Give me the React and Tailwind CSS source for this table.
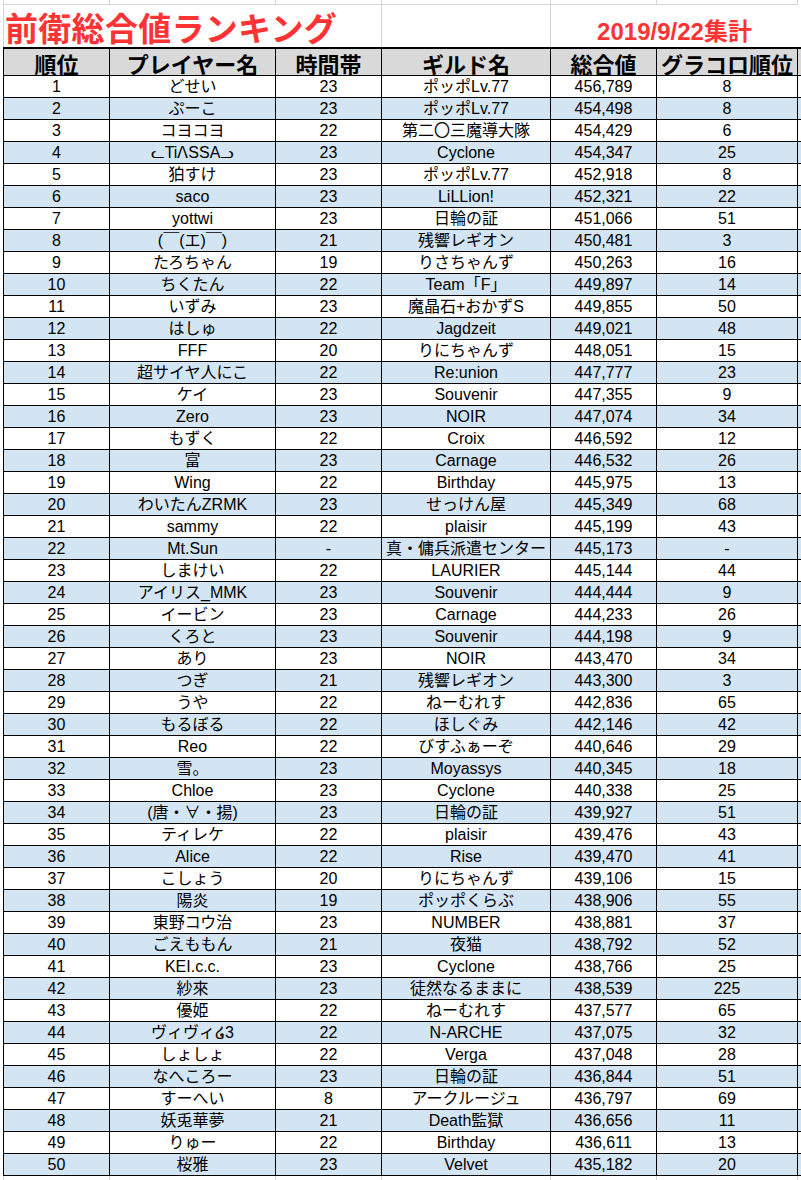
const rows = [
  ["1", "どせい", "23", "ポッポLv.77", "456,789", "8"],
  ["2", "ぷーこ", "23", "ポッポLv.77", "454,498", "8"],
  ["3", "コヨコヨ", "22", "第二〇三魔導大隊", "454,429", "6"],
  ["4", "ᓚTiᐱSSAᓗ", "23", "Cyclone", "454,347", "25"],
  ["5", "狛すけ", "23", "ポッポLv.77", "452,918", "8"],
  ["6", "saco", "23", "LiLLion!", "452,321", "22"],
  ["7", "yottwi", "23", "日輪の証", "451,066", "51"],
  ["8", "(￣(エ)￣)", "21", "残響レギオン", "450,481", "3"],
  ["9", "たろちゃん", "19", "りさちゃんず", "450,263", "16"],
  ["10", "ちくたん", "22", "Team「F」", "449,897", "14"],
  ["11", "いずみ", "23", "魔晶石+おかずS", "449,855", "50"],
  ["12", "はしゅ", "22", "Jagdzeit", "449,021", "48"],
  ["13", "FFF", "20", "りにちゃんず", "448,051", "15"],
  ["14", "超サイヤ人にこ", "22", "Re:union", "447,777", "23"],
  ["15", "ケイ", "23", "Souvenir", "447,355", "9"],
  ["16", "Zero", "23", "NOIR", "447,074", "34"],
  ["17", "もずく", "22", "Croix", "446,592", "12"],
  ["18", "富", "23", "Carnage", "446,532", "26"],
  ["19", "Wing", "22", "Birthday", "445,975", "13"],
  ["20", "わいたんZRMK", "23", "せっけん屋", "445,349", "68"],
  ["21", "sammy", "22", "plaisir", "445,199", "43"],
  ["22", "Mt.Sun", "-", "真・傭兵派遣センター", "445,173", "-"],
  ["23", "しまけい", "22", "LAURIER", "445,144", "44"],
  ["24", "アイリス_MMK", "23", "Souvenir", "444,444", "9"],
  ["25", "イービン", "23", "Carnage", "444,233", "26"],
  ["26", "くろと", "23", "Souvenir", "444,198", "9"],
  ["27", "あり", "23", "NOIR", "443,470", "34"],
  ["28", "つぎ", "21", "残響レギオン", "443,300", "3"],
  ["29", "うや", "22", "ねーむれす", "442,836", "65"],
  ["30", "もるぼる", "22", "ほしぐみ", "442,146", "42"],
  ["31", "Reo", "22", "びすふぁーぞ", "440,646", "29"],
  ["32", "雪。", "23", "Moyassys", "440,345", "18"],
  ["33", "Chloe", "23", "Cyclone", "440,338", "25"],
  ["34", "(唐・∀・揚)", "23", "日輪の証", "439,927", "51"],
  ["35", "ティレケ", "22", "plaisir", "439,476", "43"],
  ["36", "Alice", "22", "Rise", "439,470", "41"],
  ["37", "こしょう", "20", "りにちゃんず", "439,106", "15"],
  ["38", "陽炎", "19", "ポッポくらぶ", "438,906", "55"],
  ["39", "東野コウ治", "23", "NUMBER", "438,881", "37"],
  ["40", "ごえももん", "21", "夜猫", "438,792", "52"],
  ["41", "KEI.c.c.", "23", "Cyclone", "438,766", "25"],
  ["42", "紗來", "23", "徒然なるままに", "438,539", "225"],
  ["43", "優姫", "22", "ねーむれす", "437,577", "65"],
  ["44", "ヴィヴィ໒3", "22", "N-ARCHE", "437,075", "32"],
  ["45", "しょしょ", "22", "Verga", "437,048", "28"],
  ["46", "なへころー", "23", "日輪の証", "436,844", "51"],
  ["47", "すーへい", "8", "アークルージュ", "436,797", "69"],
  ["48", "妖兎華夢", "21", "Death監獄", "436,656", "11"],
  ["49", "りゅー", "22", "Birthday", "436,611", "13"],
  ["50", "桜雅", "23", "Velvet", "435,182", "20"],
];

const headers = ["順位", "プレイヤー名", "時間帯", "ギルド名", "総合値", "グラコロ順位"];

// column template shared by every row so the lines stack up
const cols = "grid grid-cols-[106px_166px_106px_169px_106px_141px]";

export default function App() {
  return (
    <div
      className="w-[801px] h-[1180px] overflow-hidden bg-white text-black"
      style={{ fontFamily: '"Liberation Sans", "Noto Sans CJK JP", sans-serif' }}
    >
      <div className="pl-[3px]">
        {/* top sliver of the sheet */}
        <div className={`${cols} h-[5px] border-l border-[#d4d4d4]`}>
          {headers.map((h) => (
            <div key={h} className="border-r border-b border-[#d4d4d4]" />
          ))}
        </div>

        {/* title row */}
        <div className={`${cols} h-[42px] border-l border-[#d4d4d4]`}>
          <div className="col-span-3 flex items-center pl-[1px] pt-[3px] border-r border-[#d4d4d4] whitespace-nowrap">
            <span
              className="text-[33px] font-bold leading-none tracking-[0.3px] text-[#ff3333]"
              style={{ fontFamily: '"Noto Sans CJK JP", sans-serif' }}
            >
              前衛総合値ランキング
            </span>
          </div>
          <div className="border-r border-[#d4d4d4]" />
          <div className="col-span-2 flex items-end justify-center pb-[3px]">
            <span className="text-[24px] font-bold leading-none text-[#ff3333]">
              2019/9/22集計
            </span>
          </div>
        </div>

        {/* header */}
        <div className={`${cols} h-[29px] border-t-2 border-b border-l border-black bg-[#d9d9d9]`}>
          {headers.map((h) => (
            <div
              key={h}
              className="flex items-center justify-center pt-[2px] border-r border-black text-[22px] font-bold leading-none whitespace-nowrap"
              style={{ fontFamily: '"Noto Sans CJK JP", sans-serif' }}
            >
              {h}
            </div>
          ))}
        </div>

        {/* data rows */}
        {rows.map((r, i) => (
          <div
            key={r[0]}
            className={`${cols} h-[22px] border-b border-l border-black ${i % 2 === 1 ? "bg-[#d3e4f3]" : "bg-white"}`}
          >
            {r.map((c, j) => (
              <div
                key={j}
                className="flex items-center justify-center border-r border-black text-[16px] leading-none whitespace-nowrap"
              >
                {c}
              </div>
            ))}
          </div>
        ))}

        {/* gridlines under the table */}
        <div className={`${cols} h-[10px] border-l border-[#d4d4d4]`}>
          {headers.map((h) => (
            <div key={h} className="border-r border-[#d4d4d4]" />
          ))}
        </div>
      </div>
    </div>
  );
}
